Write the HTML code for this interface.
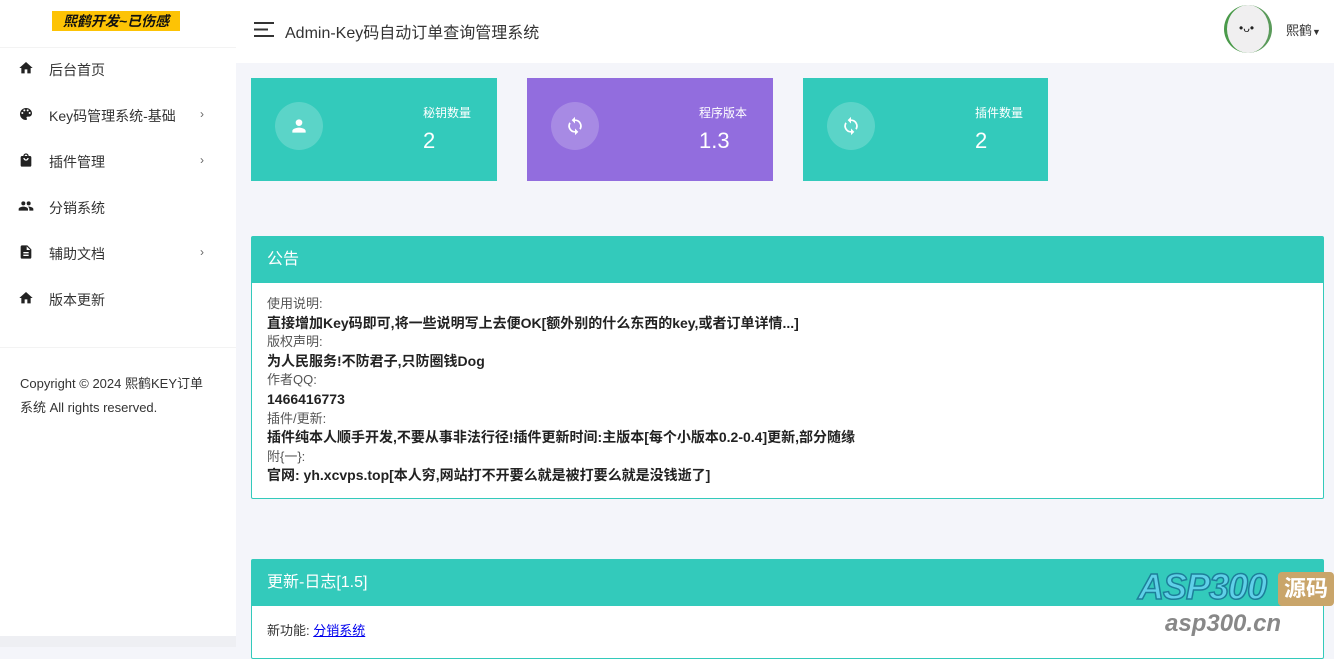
<!DOCTYPE html>
<html><head><meta charset="utf-8"><style>
*{margin:0;padding:0;box-sizing:border-box}
body{width:1334px;height:647px;overflow:hidden;background:#f4f5fa;font-family:"Liberation Sans","Noto Sans CJK SC",sans-serif;position:relative;color:#333}
.side{position:absolute;left:0;top:0;width:236px;height:636px;background:#fff}
.side .logo{position:absolute;left:52px;top:11px;width:128px;height:20px;background:#fdc305;font-style:italic;font-weight:bold;font-size:14px;text-align:center;line-height:20px;color:#111}
.side .hr{position:absolute;left:0;top:47px;width:236px;border-top:1px solid #f3f3f3}
.item{position:absolute;left:0;width:236px;height:20px;font-size:14px;color:#333}
.item svg{position:absolute;left:18px;top:0}
.item span{position:absolute;left:49px;top:0px}
.item i{position:absolute;left:200px;top:1px;font-style:normal;font-size:12px;color:#666}
.copy{position:absolute;left:20px;top:372px;font-size:13px;line-height:24px;color:#333;width:190px}
.bottom{position:absolute;left:0;top:636px;width:236px;height:11px;background:#eeeff3}
.hdr{position:absolute;left:236px;top:0;width:1098px;height:63px;background:#fff}
.title{position:absolute;left:285px;top:20px;font-size:16px;color:#333}
.card{position:absolute;top:78px;height:103px;color:#fff}
.card .c{position:absolute;left:24px;top:24px;width:48px;height:48px;border-radius:50%;background:rgba(255,255,255,.2)}
.card .c svg{position:absolute;left:14px;top:14px}
.card .l{position:absolute;left:172px;top:26px;font-size:12px}
.card .v{position:absolute;left:172px;top:50px;font-size:22px}
.panel{position:absolute;left:251px;width:1073px;border:1px solid #33cabb;background:#fff;border-radius:2px}
.panel .h{height:46px;background:#33cabb;color:#fff;font-size:16px;line-height:46px;padding-left:15px}
.panel .b{padding:12px 15px;font-size:13px;line-height:18.6px;color:#555}
.panel b{color:#222;font-size:14px}
</style></head><body>
<div class="side">
<div class="logo">熙鹤开发~已伤感</div>
<div class="hr"></div>
<div class="item" style="top:60px"><svg width="16" height="16" viewBox="0 0 24 24"><path d="M10 20v-6h4v6h5v-8h3L12 3 2 12h3v8z" fill="#222"/></svg><span>后台首页</span></div>
<div class="item" style="top:106px"><svg width="16" height="16" viewBox="0 0 24 24"><path d="M12 3a9 9 0 000 18c.8 0 1.5-.7 1.5-1.5 0-.4-.1-.7-.4-1-.2-.3-.4-.6-.4-1 0-.8.7-1.5 1.5-1.5H16c2.8 0 5-2.2 5-5C21 6.6 17 3 12 3zM6.5 12a1.5 1.5 0 110-3 1.5 1.5 0 010 3zm3-4a1.5 1.5 0 110-3 1.5 1.5 0 010 3zm5 0a1.5 1.5 0 110-3 1.5 1.5 0 010 3zm3 4a1.5 1.5 0 110-3 1.5 1.5 0 010 3z" fill="#222"/></svg><span>Key码管理系统-基础</span><i>›</i></div>
<div class="item" style="top:152px"><svg width="16" height="16" viewBox="0 0 24 24"><path d="M18 6h-2a4 4 0 00-8 0H6c-1.1 0-2 .9-2 2v12c0 1.1.9 2 2 2h12c1.1 0 2-.9 2-2V8c0-1.1-.9-2-2-2zm-6-2a2 2 0 012 2h-4a2 2 0 012-2zm-2 5a2 2 0 004 0h2a4 4 0 01-8 0z" fill="#222"/></svg><span>插件管理</span><i>›</i></div>
<div class="item" style="top:198px"><svg width="16" height="16" viewBox="0 0 24 24"><path d="M16 11a3 3 0 100-6 3 3 0 000 6zm-8 0a3 3 0 100-6 3 3 0 000 6zm0 2c-2.3 0-7 1.2-7 3.5V19h14v-2.5C15 14.2 10.3 13 8 13zm8 0c-.3 0-.6 0-1 .1 1.2.8 2 2 2 3.4V19h6v-2.5c0-2.3-4.7-3.5-7-3.5z" fill="#222"/></svg><span>分销系统</span></div>
<div class="item" style="top:244px"><svg width="16" height="16" viewBox="0 0 24 24"><path d="M14 2H6c-1.1 0-2 .9-2 2v16c0 1.1.9 2 2 2h12c1.1 0 2-.9 2-2V8zm2 16H8v-2h8zm0-4H8v-2h8zm-3-5V3.5L18.5 9z" fill="#222"/></svg><span>辅助文档</span><i>›</i></div>
<div class="item" style="top:290px"><svg width="16" height="16" viewBox="0 0 24 24"><path d="M10 20v-6h4v6h5v-8h3L12 3 2 12h3v8z" fill="#222"/></svg><span>版本更新</span></div>
<div class="hr" style="top:347px"></div>
<div class="copy">Copyright © 2024 熙鹤KEY订单系统 All rights reserved.</div>
</div>
<div class="bottom"></div>
<div class="hdr"></div>
<svg style="position:absolute;left:254px;top:22px" width="20" height="16"><path d="M0 1h20M0 7.5h14M0 14h20" stroke="#333" stroke-width="2"/></svg>
<div class="title" style="top:19px">Admin-Key码自动订单查询管理系统</div>
<div style="position:absolute;left:1224px;top:5px;width:48px;height:48px;border-radius:50%;background:#f0eff0;border-left:3px solid #4a9a4a;border-right:3px solid #5a9a5a;overflow:hidden"><div style="position:absolute;left:12px;top:16px;font-size:12px;color:#222">•ᴗ•</div></div>
<div style="position:absolute;left:1286px;top:20px;font-size:13px;color:#333">熙鹤<span style="font-size:9px">▼</span></div>

<div class="card" style="left:251px;width:246px;background:#33cabb"><div class="c"><svg width="20" height="20" viewBox="0 0 24 24"><path d="M12 12a4 4 0 100-8 4 4 0 000 8zm0 2c-2.7 0-8 1.3-8 4v2h16v-2c0-2.7-5.3-4-8-4z" fill="#fff"/></svg></div><div class="l">秘钥数量</div><div class="v">2</div></div>
<div class="card" style="left:527px;width:246px;background:#926dde"><div class="c"><svg width="20" height="20" viewBox="0 0 24 24"><path d="M12 4V1L8 5l4 4V6a6 6 0 015.2 9l1.5 1.5A8 8 0 0012 4zm0 14a6 6 0 01-5.2-9L5.3 7.5A8 8 0 0012 20v3l4-4-4-4z" fill="#fff"/></svg></div><div class="l">程序版本</div><div class="v">1.3</div></div>
<div class="card" style="left:803px;width:245px;background:#33cabb"><div class="c"><svg width="20" height="20" viewBox="0 0 24 24"><path d="M12 4V1L8 5l4 4V6a6 6 0 015.2 9l1.5 1.5A8 8 0 0012 4zm0 14a6 6 0 01-5.2-9L5.3 7.5A8 8 0 0012 20v3l4-4-4-4z" fill="#fff"/></svg></div><div class="l">插件数量</div><div class="v">2</div></div>

<div class="panel" style="top:236px;height:263px"><div class="h">公告</div><div class="b">
使用说明:<br><b>直接增加Key码即可,将一些说明写上去便OK[额外别的什么东西的key,或者订单详情...]</b><br>版权声明:<br><b>为人民服务!不防君子,只防圈钱Dog</b><br>作者QQ:<br><b>1466416773</b><br>插件/更新:<br><b>插件纯本人顺手开发,不要从事非法行径!插件更新时间:主版本[每个小版本0.2-0.4]更新,部分随缘</b><br>附{一}:<br><b>官网: yh.xcvps.top[本人穷,网站打不开要么就是被打要么就是没钱逝了]</b>
</div></div>
<div class="panel" style="top:559px;height:100px"><div class="h">更新-日志[1.5]</div><div class="b" style="color:#333;padding-top:16px">新功能: <a style="color:#00e;text-decoration:underline">分销系统</a></div></div>
<div style="position:absolute;left:1138px;top:566px;font-size:36px;font-weight:bold;font-style:italic;color:#5fd0e8;-webkit-text-stroke:1.5px #1d7f9a;letter-spacing:-1px">ASP300</div>
<div style="position:absolute;left:1278px;top:572px;width:56px;height:34px;background:#c9a56a;border-radius:4px;color:#fff;font-size:22px;font-weight:bold;text-align:center;line-height:34px">源码</div>
<div style="position:absolute;left:1165px;top:610px;font-size:24px;font-weight:bold;font-style:italic;color:#888">asp300.cn</div>
</body></html>
